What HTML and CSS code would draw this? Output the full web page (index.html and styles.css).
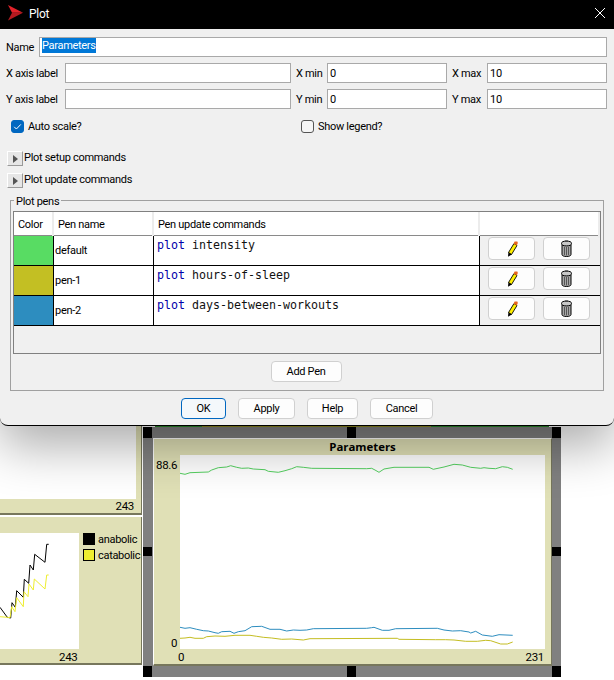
FILE: index.html
```html
<!DOCTYPE html>
<html lang="en">
<head>
    <meta charset="UTF-8">
    <title>Plot</title>
    <link rel="stylesheet" href="styles.css">
</head>
<body>
<div class="stage">

    <!-- widgets on the model canvas, behind the dialog -->
    <div class="widget plot-top">
        <div class="plot-area"></div>
        <span class="num x-max">243</span>
    </div>
    <div class="widget plot-left">
        <div class="plot-area">
            <svg class="lines" width="79" height="116">
                <polyline class="line" stroke="#000" points="0,74.3 7.3,84.3 10.7,85 12,69.7 15.3,74.3 16.7,57.7 23.3,64.3 24.3,46.3 28.7,50.3 30,32 33.3,37 34.7,21.3 45,29.3 46.7,11.3 48.7,11.3"/>
                <polyline class="line" stroke="#eeee30" points="0,83.7 7.3,84.3 10,84.7 11.7,73.7 15,78.7 16.7,64.7 23.3,73.7 24,58.7 28,63.7 29,51 33.3,57 34.3,46 45,56 46.7,42 48.7,42"/>
            </svg>
        </div>
        <div class="legend">
            <div class="legend-row"><i class="swatch swatch-black"></i>anabolic</div>
            <div class="legend-row"><i class="swatch swatch-yellow"></i>catabolic</div>
        </div>
        <span class="num x-max">243</span>
    </div>

    <div class="under-edge"></div>
    <div class="frame">
        <div class="widget plot-main">
            <div class="plot-title">Parameters</div>
            <span class="num y-top">88.6</span>
            <span class="num y-zero">0</span>
            <span class="num x-zero">0</span>
            <span class="num x-max">231</span>
            <div class="plot-area">
                <svg class="lines" width="365" height="194">
                    <polyline class="line" stroke="#55d060" points="0,18.3 5,19.3 10,17.7 28.3,17 31.7,15 38.3,12.7 46.7,12 50.7,10.7 56.7,12.3 61.7,13.3 68.3,13 73.3,14 85,14.7 88.3,16.3 98.3,17.3 105,15.7 111.7,13.7 116.7,11.7 123.3,12.3 131.7,13.3 186.7,13.7 191.7,13.3 195,15 199,17.3 204,14 214,12.3 249,12.3 253.3,14.3 264,12 274,9.3 282.3,10 290.7,12.3 300.7,13.3 304,12.7 309,13.3 315.7,13.7 322.3,11.7 327.3,12.3 332.7,14.3"/>
                    <polyline class="line" stroke="#c4bd22" points="0,183.3 5,183 10,182.3 15,183.3 23.3,183.3 26.7,181.7 35,181 45,181.3 55,180.3 70,180.3 76.7,181.3 83.3,182.3 91.7,183 101.7,184.3 111.7,184 123.3,185 130,183.7 217.3,183.3 219,184.3 255.7,184.7 265.7,184.7 274,185 285.7,186.3 297.3,186.3 305.7,185.3 310.7,185.7 320.7,189 327.3,189 332.7,187"/>
                    <polyline class="line" stroke="#2d8dbf" points="0,172.3 5,173.3 10,172.7 16.7,174.3 23.3,175.7 28.3,176 35,177.7 38.3,178.3 41.7,176.7 50,176.3 54,178.3 58.3,176.7 65,175.7 71.7,171.7 81.7,171.3 90,174.3 100,174.3 106.7,176 113.3,175 120,175.3 126.7,175 133.3,173.7 186.7,173.3 191.7,172.7 194,172.3 202.3,175.3 209,175.3 215.7,173.7 257.3,173.3 264,175 272.3,176 280.7,175.7 289,177 290.7,178 295.7,176.3 302.3,180 312.3,181.3 319,179.7 332.7,180.3"/>
                </svg>
            </div>
        </div>
        <i class="handle h-tl"></i><i class="handle h-tm"></i><i class="handle h-tr"></i>
        <i class="handle h-ml"></i><i class="handle h-mr"></i>
        <i class="handle h-bl"></i><i class="handle h-bm"></i><i class="handle h-br"></i>
    </div>

    <!-- the dialog -->
    <div class="dialog">
        <div class="titlebar">
            <svg class="logo" width="16" height="16" viewBox="0 0 16 16">
                <polygon points="0,0 15,7.7 4,7.7" fill="#e3222a"/>
                <polygon points="0,15.5 15,7.7 4,7.7" fill="#b51a20"/>
            </svg>
            <span class="title-text">Plot</span>
            <svg class="close" width="10" height="10" viewBox="0 0 10 10">
                <path d="M0 0L10 10M10 0L0 10" stroke="#fff" stroke-width="1" fill="none"/>
            </svg>
        </div>

        <div class="body">
            <div class="name-row">
                <label>Name</label>
                <div class="input"><span class="selected">Parameters</span></div>
            </div>
            <div class="axis-row">
                <label>X axis label</label>
                <div class="input"></div>
                <label class="side">X min</label>
                <div class="input">0</div>
                <label class="side">X max</label>
                <div class="input">10</div>
            </div>
            <div class="axis-row">
                <label>Y axis label</label>
                <div class="input"></div>
                <label class="side">Y min</label>
                <div class="input">0</div>
                <label class="side">Y max</label>
                <div class="input">10</div>
            </div>

            <div class="check-row">
                <div class="check-item">
                    <span class="check checked">
                        <svg width="13" height="13" viewBox="0 0 13 13"><path d="M3.2 6.8L5.4 9L9.8 4.4" stroke="#fff" stroke-width="1" fill="none"/></svg>
                    </span>
                    Auto scale?
                </div>
                <div class="check-item">
                    <span class="check"></span>
                    Show legend?
                </div>
            </div>

            <div class="expander first">
                <span class="arrow-btn"><i class="arrow"></i></span><span class="exp-label">Plot setup commands</span>
            </div>
            <div class="expander">
                <span class="arrow-btn"><i class="arrow"></i></span><span class="exp-label">Plot update commands</span>
            </div>

            <div class="group">
                <span class="group-title">Plot pens</span>
                <div class="pens">
                    <div class="pens-head">
                        <div>Color</div>
                        <div>Pen name</div>
                        <div>Pen update commands</div>
                        <div></div>
                    </div>

                    <div class="pen-row">
                        <div class="pen-color green"></div>
                        <div class="pen-name">default</div>
                        <div class="pen-cmd"><span class="kw">plot</span> intensity</div>
                        <div class="pen-actions">
                            <span class="icon-btn"><svg width="12" height="16" viewBox="0 0 12 16"><use href="#pencil"/></svg></span>
                            <span class="icon-btn"><svg width="13" height="17" viewBox="0 0 13 17"><use href="#trash"/></svg></span>
                        </div>
                    </div>
                    <div class="pen-row">
                        <div class="pen-color olive"></div>
                        <div class="pen-name">pen-1</div>
                        <div class="pen-cmd"><span class="kw">plot</span> hours-of-sleep</div>
                        <div class="pen-actions">
                            <span class="icon-btn"><svg width="12" height="16" viewBox="0 0 12 16"><use href="#pencil"/></svg></span>
                            <span class="icon-btn"><svg width="13" height="17" viewBox="0 0 13 17"><use href="#trash"/></svg></span>
                        </div>
                    </div>
                    <div class="pen-row">
                        <div class="pen-color blue"></div>
                        <div class="pen-name">pen-2</div>
                        <div class="pen-cmd"><span class="kw">plot</span> days-between-workouts</div>
                        <div class="pen-actions">
                            <span class="icon-btn"><svg width="12" height="16" viewBox="0 0 12 16"><use href="#pencil"/></svg></span>
                            <span class="icon-btn"><svg width="13" height="17" viewBox="0 0 13 17"><use href="#trash"/></svg></span>
                        </div>
                    </div>
                </div>
                <div class="add-row"><span class="btn btn-add">Add Pen</span></div>
            </div>

            <div class="footer">
                <span class="btn btn-ok">OK</span>
                <span class="btn btn-apply">Apply</span>
                <span class="btn btn-help">Help</span>
                <span class="btn btn-cancel">Cancel</span>
            </div>
        </div>
    </div>
</div>

<svg class="defs" width="0" height="0">
    <defs>
        <g id="pencil">
            <polygon points="2.5,11.5 8,2.5 11,4.5 5.5,13.5" fill="#ffee00" stroke="#000" stroke-width=".9"/>
            <polygon points="7.6,2.6 8.6,.4 11.4,.4 11.8,2 10.8,4.6" fill="#e8641e"/>
            <polygon points="2,15.8 2.4,11.2 5.8,13.4" fill="#000"/>
        </g>
        <g id="trash">
            <path d="M2 4.5V14.5C2 15.8 4 16.5 6.5 16.5S11 15.8 11 14.5V4.5Z" fill="#a8a8a8" stroke="#000" stroke-width="1"/>
            <ellipse cx="6.5" cy="3.5" rx="5" ry="2.4" fill="#c8c8c8" stroke="#000" stroke-width="1"/>
            <path d="M4.5 7V15M6.5 7V15.5M8.5 7V15" stroke="#555" stroke-width="1"/>
            <rect x="5" y=".4" width="3" height="1.6" fill="#444"/>
        </g>
    </defs>
</svg>
</body>
</html>
```

FILE: styles.css
```css
* {
    margin: 0;
    padding: 0;
    box-sizing: border-box;
}
body {
    background: #fff;
    font-family: "Roboto", "Liberation Sans", sans-serif;
    font-size: 11px;
    letter-spacing: -.3px;
    color: #000;
}
.stage {
    position: relative;
    width: 614px;
    height: 680px;
    overflow: hidden;
    background: #fff;
}
.defs {
    position: absolute;
}

/* canvas widgets */
.widget {
    position: absolute;
    background: #e0e0b6;
    border-right: 1px solid #77775c;
    border-bottom: 2px solid #77775c;
}
.plot-area {
    position: absolute;
    background: #fff;
}
.lines {
    display: block;
}
.line {
    fill: none;
    stroke-width: 1;
}
.num {
    position: absolute;
    font-size: 11.5px;
    line-height: 14px;
}
.plot-top {
    left: 0;
    top: 400px;
    width: 142px;
    height: 115px;
}
.plot-top .plot-area {
    left: 0;
    top: 0;
    width: 136px;
    height: 99px;
}
.plot-top .x-max {
    right: 7px;
    top: 99px;
}
.plot-left {
    left: 0;
    top: 517px;
    width: 142px;
    height: 148px;
}
.plot-left .plot-area {
    left: 0;
    top: 16px;
    width: 79px;
    height: 116px;
}
.plot-left .x-max {
    left: 59px;
    top: 133px;
}
.legend {
    position: absolute;
    left: 83px;
    top: 16px;
}
.legend-row {
    display: flex;
    align-items: center;
    gap: 3px;
    height: 12px;
    margin-bottom: 4px;
    font-size: 11px;
    white-space: nowrap;
}
.swatch {
    width: 12px;
    height: 12px;
    border: 1px solid #000;
}
.swatch-black {
    background: #000;
}
.swatch-yellow {
    background: #eeee30;
}

.under-edge {
    position: absolute;
    left: 155px;
    top: 426px;
    width: 394px;
    height: 1px;
    background: linear-gradient(to right, #2a8a2a 12%, #8f8a20 12%, #8f8a20 70%, #2a8a2a 70%);
}
.frame {
    position: absolute;
    left: 143px;
    top: 427px;
    width: 418px;
    height: 250px;
    background: #808080;
}
.plot-main {
    left: 10px;
    top: 11px;
    width: 399px;
    height: 228px;
    border-left: 1px solid #fff;
    border-top: 1px solid #fff;
}
.plot-main .plot-area {
    left: 26px;
    top: 16px;
    width: 365px;
    height: 194px;
}
.plot-title {
    font-family: "Open Sans", sans-serif;
    font-weight: bold;
    font-size: 11.4px;
    letter-spacing: 0;
    line-height: 16px;
    text-align: center;
    padding-left: 20px;
}
.plot-main .y-top {
    left: 2px;
    top: 19px;
}
.plot-main .y-zero {
    left: 17px;
    top: 197px;
}
.plot-main .x-zero {
    left: 24px;
    top: 211px;
}
.plot-main .x-max {
    right: 7px;
    top: 211px;
}
.handle {
    position: absolute;
    width: 9px;
    height: 11px;
    background: #000;
}
.h-tl { left: 0; top: 0; }
.h-tm { left: 204px; top: 0; }
.h-tr { right: 0; top: 0; }
.h-ml { left: 0; top: 120px; height: 9px; }
.h-mr { right: 0; top: 120px; height: 9px; }
.h-bl { left: 0; bottom: 0; }
.h-bm { left: 204px; bottom: 0; }
.h-br { right: 0; bottom: 0; }

/* dialog */
.dialog {
    position: absolute;
    left: 0;
    top: 0;
    width: 614px;
    height: 426px;
    background: #f0f0f0;
    border-bottom: 1px solid #000;
    border-radius: 0 0 8px 8px;
    box-shadow: 0 20px 50px rgba(0, 0, 0, .33);
}
.titlebar {
    display: flex;
    align-items: center;
    height: 29px;
    padding-left: 8px;
    background: #000;
    color: #fff;
}
.logo {
    margin-top: -3px;
}
.title-text {
    margin-left: 5px;
    font-size: 12px;
    margin-top: -2px;
}
.close {
    margin-left: auto;
    margin-right: 9px;
    margin-top: -3px;
}
.body {
    padding-top: 8px;
}
.input {
    height: 20px;
    padding-left: 2px;
    background: #fff;
    border: 1px solid #a9a9a9;
    line-height: 20px;
    white-space: nowrap;
}
.selected {
    display: inline-block;
    height: 15px;
    line-height: 16px;
    background: #0078d7;
    color: #fff;
    vertical-align: 2px;
}
label {
    line-height: 22px;
    height: 20px;
    white-space: nowrap;
}
.name-row {
    display: grid;
    grid-template-columns: 33px 568px;
    padding-left: 6px;
}
.axis-row {
    display: grid;
    grid-template-columns: 59px 226px 36px 120px 40px 120px;
    padding-left: 6px;
    margin-top: 6px;
}
.side {
    padding-left: 5px;
}
.check-row {
    display: grid;
    grid-template-columns: 290px 200px;
    margin-top: 11px;
    padding-left: 11px;
    height: 13px;
    line-height: 13px;
}
.check-item {
    display: flex;
    gap: 4px;
    align-items: center;
}
.check {
    display: block;
    width: 13px;
    height: 13px;
    border: 1px solid #555;
    border-radius: 3px;
    background: #f6f6f6;
}
.check svg {
    display: block;
    margin: -1px;
}
.checked {
    background: #0067c0;
    border-color: #0067c0;
}
.expander {
    display: flex;
    align-items: center;
    height: 15px;
    margin-top: 7px;
    padding-left: 7px;
}
.expander.first {
    margin-top: 18px;
}
.exp-label {
    margin-top: -3px;
}
.arrow-btn {
    display: flex;
    align-items: center;
    justify-content: center;
    width: 16px;
    height: 15px;
    margin-right: 1px;
    background: #e6e6e6;
    border-right: 1px solid #9a9a9a;
    border-bottom: 1px solid #9a9a9a;
    border-top: 1px solid #fff;
    border-left: 1px solid #fff;
}
.arrow {
    width: 0;
    height: 0;
    border-left: 5px solid #555;
    border-top: 4px solid transparent;
    border-bottom: 4px solid transparent;
}
.group {
    position: relative;
    width: 594px;
    height: 191px;
    margin: 12px 0 0 10px;
    padding: 10px 0 0 2px;
    border: 1px solid #a0a0a0;
}
.group-title {
    position: absolute;
    left: 3px;
    top: -7px;
    padding: 0 2px;
    background: #f0f0f0;
    line-height: 15px;
}
.pens {
    width: 588px;
    height: 143px;
    background: #f0f0f0;
    border: 1px solid #808080;
}
.pens-head,
.pen-row {
    display: grid;
    grid-template-columns: 40px 100px 326px 120px;
}
.pens-head {
    height: 24px;
    background: #fff;
    border-bottom: 1px solid #8a8a8a;
    line-height: 26px;
}
.pens-head div {
    padding-left: 4px;
    border-right: 2px solid #ececec;
}
.pen-row {
    height: 30px;
    border-bottom: 1px solid #000;
}
.pen-color {
    border-right: 1px solid #000;
}
.green { background: #58dc63; }
.olive { background: #c3bf23; }
.blue { background: #2d8dbf; }
.pen-name {
    padding-left: 1px;
    background: #fff;
    border-right: 1px solid #000;
    line-height: 29px;
}
.pen-cmd {
    padding: 2px 0 0 3px;
    background: #fff;
    border-right: 1px solid #000;
    font-family: "DejaVu Sans Mono", monospace;
    font-size: 11.63px;
    letter-spacing: 0;
    line-height: 14px;
    white-space: pre;
    color: #111;
}
.kw {
    color: #0000aa;
}
.pen-actions {
    display: flex;
    gap: 8px;
    padding: 1px 0 0 8px;
}
.icon-btn {
    display: flex;
    align-items: center;
    justify-content: center;
    width: 47px;
    height: 23px;
    background: #fdfdfd;
    border: 1px solid #d0d0d0;
    border-radius: 4px;
}
.btn {
    display: block;
    height: 21px;
    background: #fdfdfd;
    border: 1px solid #d0d0d0;
    border-radius: 4px;
    line-height: 19px;
    text-align: center;
}
.add-row {
    display: flex;
    justify-content: center;
    margin: 7px 0 0 -4px;
}
.btn-add {
    width: 71px;
}
.footer {
    display: flex;
    margin-top: 7px;
    padding-left: 181px;
}
.btn-ok {
    width: 45px;
    background: #f4f8fb;
    border-color: #0067c0;
}
.btn-apply {
    width: 57px;
    margin-left: 12px;
}
.btn-help {
    width: 51px;
    margin-left: 12px;
}
.btn-cancel {
    width: 63px;
    margin-left: 12px;
}
```
